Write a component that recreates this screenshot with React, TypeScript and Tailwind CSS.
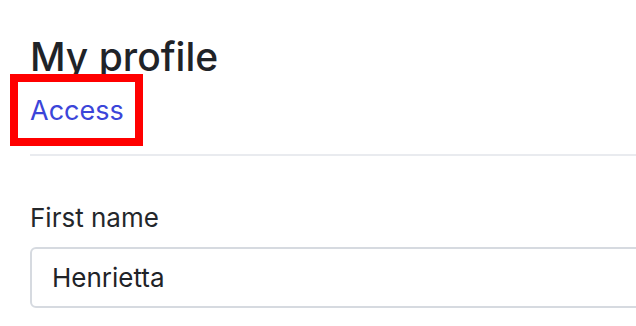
export default function App() {
  return (
    <div
      className="w-[720px] bg-white pl-[30px] pt-[33px] text-[#1f2328]"
      style={{ fontFamily: 'Inter, "Noto Sans", sans-serif' }}
    >
      <h1 className="text-[39px] font-medium leading-[48px]">My profile</h1>
      <div className="relative mt-[14px] h-[32px]">
        <a className="text-[27px] leading-[32px] text-[#3b45d9]">Access</a>
        <div className="absolute left-[-20px] top-[-21px] h-[72px] w-[133px] border-[8px] border-[#ff0000]" />
      </div>
      <div className="mt-[27px] h-[2px] bg-[#e9ebef]" />
      <div className="mt-[46px]">
        <label className="block text-[26px] leading-[32px] text-[#24272b]">First name</label>
        <div className="mt-[13px] flex h-[61px] items-center rounded-[6px] border-2 border-[#d6dae0] pl-[20px] text-[26px] text-[#1f2328]">
          Henrietta
        </div>
      </div>
    </div>
  );
}
